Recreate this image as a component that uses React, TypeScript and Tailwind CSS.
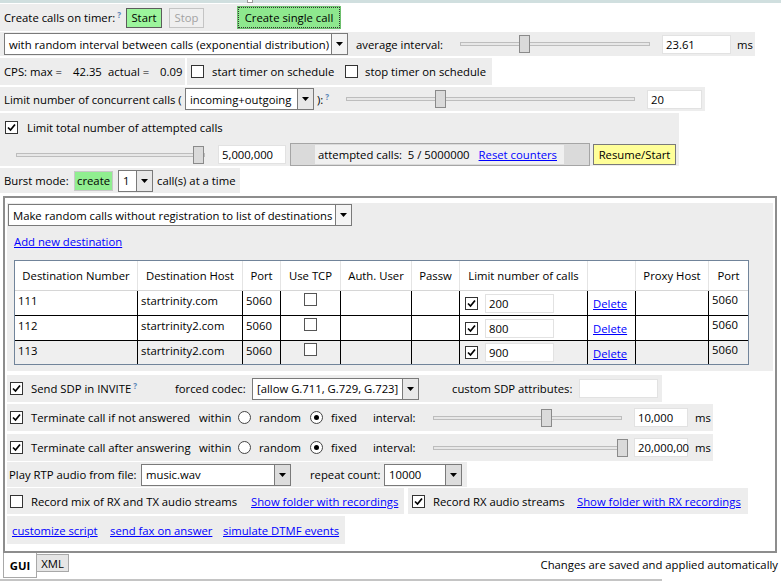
import React from "react";

function Check({ on }: { on?: boolean }) {
  return (
    <span className="inline-flex h-[13px] w-[13px] shrink-0 items-center justify-center border border-[#333] bg-white">
      {on && (
        <svg width="9" height="9" viewBox="0 0 9 9">
          <path d="M1 4.5 L3.5 7 L8 1.5" fill="none" stroke="#000" strokeWidth="1.7" />
        </svg>
      )}
    </span>
  );
}

function Radio({ on }: { on?: boolean }) {
  return (
    <span className="inline-flex h-[13px] w-[13px] shrink-0 items-center justify-center rounded-full border border-[#444] bg-white">
      {on && <span className="h-[5px] w-[5px] rounded-full bg-black" />}
    </span>
  );
}

function Select({ value, w, arrow = "bg-[#f4f4f4]" }: { value: string; w: string; arrow?: string }) {
  return (
    <div className={`flex h-[22px] shrink-0 items-stretch border border-[#7a7a7a] bg-white ${w}`}>
      <span className="flex flex-1 items-center overflow-hidden whitespace-nowrap px-[4px]">{value}</span>
      <span className={`flex w-[16px] items-center justify-center border-l border-[#7a7a7a] ${arrow}`}>
        <svg width="7" height="4" viewBox="0 0 7 4">
          <path d="M0 0h7L3.5 4z" fill="#000" />
        </svg>
      </span>
    </div>
  );
}

function Slider({ w, thumb }: { w: string; thumb: number }) {
  return (
    <div className={`relative h-[18px] shrink-0 ${w}`}>
      <div className="absolute left-0 right-0 top-[7px] h-[4px] border border-[#bdbdbd] bg-[#e7e7e7]" />
      <div className="absolute top-0 h-[18px] w-[11px] border border-[#8a8a8a] bg-[#dadada]" style={{ left: thumb }} />
    </div>
  );
}

function Field({ value, w }: { value: string; w: string }) {
  return (
    <div className={`flex h-[19px] shrink-0 items-center border border-[#e2e2e2] bg-white px-[3px] ${w}`}>{value}</div>
  );
}

function Q() {
  return <sup className="ml-[2px] text-[8px] font-bold text-[#5b86b8]">?</sup>;
}

function A({ children }: { children: React.ReactNode }) {
  return <span className="whitespace-nowrap text-[#0000ff] underline">{children}</span>;
}

const cols = [
  "w-[122px]",
  "w-[105px]",
  "w-[38px]",
  "w-[60px]",
  "w-[71px]",
  "w-[48px]",
  "w-[128px]",
  "w-[48px]",
  "w-[73px]",
  "w-[40px]",
];

const heads = [
  "Destination Number",
  "Destination Host",
  "Port",
  "Use TCP",
  "Auth. User",
  "Passw",
  "Limit number of calls",
  "",
  "Proxy Host",
  "Port",
];

const rows = [
  { num: "111", host: "startrinity.com", limit: "200", h: "h-[25px]", bg: "bg-white" },
  { num: "112", host: "startrinity2.com", limit: "800", h: "h-[25px]", bg: "bg-white" },
  { num: "113", host: "startrinity2.com", limit: "900", h: "h-[24px]", bg: "bg-[#efefef]" },
];

function DestTable() {
  return (
    <div className="ml-[6px] mt-[12px] w-[735px] border border-[#71849a]">
      <div className="flex h-[29px] bg-white">
        {heads.map((h, i) => (
          <div
            key={i}
            className={`flex items-center justify-center overflow-hidden whitespace-nowrap ${cols[i]} ${i > 0 ? "border-l border-[#e4e4e4]" : ""}`}
          >
            {h}
          </div>
        ))}
      </div>
      {rows.map((r, ri) => (
        <div key={r.num} className={`flex border-t ${ri === 0 ? "border-[#d6d6d6]" : "border-black"} ${r.h} ${r.bg}`}>
          <div className={`${cols[0]} pl-[3px] pt-[2px]`}>{r.num}</div>
          <div className={`${cols[1]} border-l border-black pl-[3px] pt-[2px]`}>{r.host}</div>
          <div className={`${cols[2]} border-l border-black pl-[3px] pt-[2px]`}>5060</div>
          <div className={`${cols[3]} flex justify-center border-l border-black pt-[2px]`}>
            <span className="inline-block h-[13px] w-[13px] border border-[#555] bg-white" />
          </div>
          <div className={`${cols[4]} border-l border-black`} />
          <div className={`${cols[5]} border-l border-black`} />
          <div className={`${cols[6]} flex items-center border-l border-black pl-[5px]`}>
            <Check on />
            <span className="ml-[7px]">
              <Field value={r.limit} w="w-[69px]" />
            </span>
          </div>
          <div className={`${cols[7]} flex items-center border-l border-black pl-[5px] pt-[1px]`}>
            <A>Delete</A>
          </div>
          <div className={`${cols[8]} border-l border-black`} />
          <div className={`${cols[9]} border-l border-black pl-[3px] pt-[1px]`}>5060</div>
        </div>
      ))}
    </div>
  );
}

export default function App() {
  return (
    <div className="relative flex h-[581px] w-[781px] flex-col overflow-hidden bg-white font-['Segoe_UI','Open_Sans',sans-serif] text-[11.3px] leading-[15px] text-black">
      {/* title strip */}
      <div className="flex h-[3px] shrink-0 bg-[#d0dfdf]">
        <div className="ml-[247px] h-[3px] w-[6px] border-x border-b border-[#9a9a9a] bg-white" />
      </div>

      {/* timer */}
      <div className="mt-[1px] flex h-[27px] w-[340px] shrink-0 items-center bg-[#ededed] pl-[4px]">
        <span className="w-[122px] whitespace-nowrap">
          Create calls on timer:
          <Q />
        </span>
        <button className="flex h-[20px] w-[36px] items-center justify-center border border-[#5c5c5c] bg-[#9cf59c]">Start</button>
        <button className="ml-[7px] flex h-[20px] w-[35px] items-center justify-center border border-[#c4c4c4] bg-[#efefef] text-[#a2a2a2]">
          Stop
        </button>
        <button className="ml-[34px] flex h-[21px] w-[102px] items-center justify-center border border-dotted border-[#333] bg-[#8ee88e] outline outline-1 outline-[#6dbf6d]">
          Create single call
        </button>
      </div>

      {/* interval */}
      <div className="mt-[1px] flex h-[24px] w-[755px] shrink-0 items-center bg-[#ededed]">
        <span className="ml-[4px]">
          <Select value="with random interval between calls (exponential distribution)" w="w-[344px]" arrow="bg-[#f4f4f4]" />
        </span>
        <span className="ml-[8px] w-[104px] whitespace-nowrap">average interval:</span>
        <Slider w="w-[190px]" thumb={59} />
        <span className="ml-[12px]">
          <Field value="23.61" w="w-[69px]" />
        </span>
        <span className="ml-[6px]">ms</span>
      </div>

      {/* cps */}
      <div className="mt-[2px] flex h-[27px] shrink-0">
        <div className="flex w-[185px] items-center bg-[#ededed] pl-[4px] whitespace-nowrap">
          <span className="w-[69px]">CPS: max =</span>
          <span className="w-[35px]">42.35</span>
          <span className="w-[52px]">actual =</span>
          <span>0.09</span>
        </div>
        <div className="ml-[2px] flex w-[305px] items-center bg-[#ededed] pl-[4px] whitespace-nowrap">
          <Check />
          <span className="ml-[8px] w-[133px]">start timer on schedule</span>
          <Check />
          <span className="ml-[7px]">stop timer on schedule</span>
        </div>
      </div>

      {/* concurrent */}
      <div className="mt-[2px] flex h-[24px] w-[705px] shrink-0 items-center bg-[#ededed] pl-[4px] whitespace-nowrap">
        <span className="w-[181px]">Limit number of concurrent calls (</span>
        <Select value="incoming+outgoing" w="w-[129px]" arrow="bg-[#e8e8e8]" />
        <span className="w-[32px] pl-[3px]">
          ):
          <Q />
        </span>
        <Slider w="w-[289px]" thumb={89} />
        <span className="ml-[12px]">
          <Field value="20" w="w-[55px]" />
        </span>
      </div>

      {/* total attempts */}
      <div className="mt-[2px] flex h-[53px] w-[679px] shrink-0 flex-col bg-[#ededed] whitespace-nowrap">
        <div className="flex items-center pl-[5px] pt-[7px]">
          <Check on />
          <span className="ml-[9px]">Limit total number of attempted calls</span>
        </div>
        <div className="mt-[8px] flex items-center">
          <span className="ml-[16px]">
            <Slider w="w-[189px]" thumb={177} />
          </span>
          <span className="ml-[13px]">
            <Field value="5,000,000" w="w-[68px]" />
          </span>
          <div className="ml-[4px] flex h-[23px] w-[300px] items-center border border-[#a5a5a5] bg-[#dadada]">
            <div className="ml-[24px] flex h-[19px] w-[249px] items-center bg-[#f0f0f0] pl-[3px]">
              <span>attempted calls:&nbsp; 5 / 5000000</span>
              <span className="ml-[9px]">
                <A>Reset counters</A>
              </span>
            </div>
          </div>
          <button className="ml-[3px] flex h-[21px] w-[83px] items-center justify-center border border-[#7a7a7a] bg-[#ffff99]">
            Resume/Start
          </button>
        </div>
      </div>

      {/* burst */}
      <div className="mt-[2px] flex h-[25px] w-[240px] shrink-0 items-center bg-[#ededed] pl-[4px] whitespace-nowrap">
        <span className="w-[70px]">Burst mode:</span>
        <button className="flex h-[20px] w-[39px] items-center justify-center border border-[#c8c8c8] bg-[#90ee90]">create</button>
        <span className="ml-[5px]">
          <Select value="1" w="w-[35px]" arrow="bg-[#e8e8e8]" />
        </span>
        <span className="ml-[4px]">call(s) at a time</span>
      </div>

      {/* scenario box */}
      <div className="ml-[3px] mt-[3px] flex h-[357px] w-[774px] shrink-0 flex-col border-2 border-[#8d8d8d] bg-white px-[2px] pt-[5px] whitespace-nowrap">
        <div className="flex h-[168px] w-[766px] shrink-0 flex-col bg-[#ededed] pl-[1px] pt-[1px]">
          <Select value="Make random calls without registration to list of destinations" w="w-[344px]" arrow="bg-[#f4f4f4]" />
          <div className="ml-[6px] mt-[8px] h-[14px]">
            <A>Add new destination</A>
          </div>
          <DestTable />
        </div>

        {/* sdp */}
        <div className="mt-[4px] flex h-[27px] w-[655px] shrink-0 items-center bg-[#ededed] pl-[3px]">
          <Check on />
          <span className="ml-[8px] w-[144px]">
            Send SDP in INVITE
            <Q />
          </span>
          <span className="w-[77px]">forced codec:</span>
          <Select value="[allow G.711, G.729, G.723]" w="w-[167px]" arrow="bg-[#e8e8e8]" />
          <span className="ml-[33px] w-[127px]">custom SDP attributes:</span>
          <Field value="" w="w-[79px]" />
        </div>

        {/* terminate rows */}
        {[
          { label: "Terminate call if not answered", thumb: 108, val: "10,000", mt: "mt-[2px]" },
          { label: "Terminate call after answering", thumb: 184, val: "20,000,00", mt: "mt-[3px]" },
        ].map((t) => (
          <div key={t.label} className={`flex h-[27px] w-[706px] shrink-0 items-center bg-[#ededed] pl-[3px] ${t.mt}`}>
            <Check on />
            <span className="ml-[8px] w-[168px]">{t.label}</span>
            <span className="w-[39px]">within</span>
            <Radio />
            <span className="ml-[8px] w-[51px]">random</span>
            <Radio on />
            <span className="ml-[8px] w-[42px]">fixed</span>
            <span className="w-[60px]">interval:</span>
            <Slider w="w-[189px]" thumb={t.thumb} />
            <span className="ml-[12px]">
              <Field value={t.val} w="w-[54px]" />
            </span>
            <span className="ml-[7px]">ms</span>
          </div>
        ))}

        {/* rtp */}
        <div className="mt-[1px] flex h-[25px] w-[460px] shrink-0 items-center bg-[#ededed] pl-[2px]">
          <span className="w-[132px]">Play RTP audio from file:</span>
          <Select value="music.wav" w="w-[150px]" arrow="bg-[#dcdcdc]" />
          <span className="ml-[19px] w-[74px]">repeat count:</span>
          <Select value="10000" w="w-[78px]" arrow="bg-[#dcdcdc]" />
        </div>

        {/* recording */}
        <div className="mt-[1px] flex h-[26px] shrink-0">
          <div className="flex w-[397px] items-center bg-[#ededed] pl-[3px]">
            <Check />
            <span className="ml-[8px] w-[220px]">Record mix of RX and TX audio streams</span>
            <A>Show folder with recordings</A>
          </div>
          <div className="ml-[4px] flex w-[340px] items-center bg-[#ededed] pl-[4px]">
            <Check on />
            <span className="ml-[8px] w-[144px]">Record RX audio streams</span>
            <A>Show folder with RX recordings</A>
          </div>
        </div>

        {/* links */}
        <div className="mt-[2px] flex h-[28px] w-[338px] shrink-0 items-center bg-[#ededed] pl-[5px]">
          <span className="w-[98px]">
            <A>customize script</A>
          </span>
          <span className="w-[113px]">
            <A>send fax on answer</A>
          </span>
          <A>simulate DTMF events</A>
        </div>
      </div>

      {/* tabs */}
      <div className="flex h-[26px] shrink-0 items-start whitespace-nowrap">
        <div className="ml-[3px] flex h-[25px] w-[34px] items-center justify-center border-x border-b border-[#a8a8a8] bg-white font-bold">
          GUI
        </div>
        <div className="mt-[1px] flex h-[18px] w-[32px] items-center justify-center border-y border-r border-[#a8a8a8] bg-[#e6e6e6]">
          XML
        </div>
        <span className="ml-auto mr-[3px] mt-[4px]">Changes are saved and applied automatically</span>
      </div>
      <div className="h-[2px] w-[662px] shrink-0 bg-[#c4c4c4]" />
    </div>
  );
}
